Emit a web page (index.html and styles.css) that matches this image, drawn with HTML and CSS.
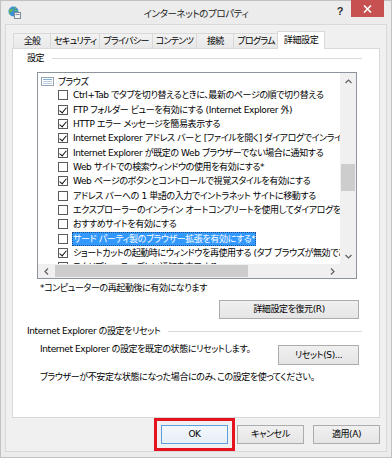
FILE: index.html
```html
<!DOCTYPE html>
<html lang="ja">
<head>
    <meta charset="UTF-8">
    <title>インターネットのプロパティ</title>
    <link rel="stylesheet" href="styles.css">
</head>
<body>
<div class="window">
    <div class="titlebar">
        <svg class="app-icon" width="13" height="13" viewBox="0 0 13 13">
            <circle cx="5.5" cy="5.5" r="5" fill="#3a8fd6"/>
            <path d="M1.6 3.4c1.4-1 3-.6 3.4.4s-.5 1.9-1.7 2.2S1.9 7.4 2.3 8.7C1.1 7.4.7 5 1.6 3.4z" fill="#62b45a"/>
            <path d="M6.3 1.1c1.1.7 1.4 1.7.8 2.4s.4 1.4 1.6 1.2l1.3-.2" fill="none" stroke="#62b45a" stroke-width="1.1"/>
            <rect x="6.5" y="6.5" width="6" height="6" fill="#f3f3f3" stroke="#7d8a9c"/>
            <path d="M7.5 8.5h4" stroke="#7d8a9c"/>
        </svg>
        <div class="title">インターネットのプロパティ</div>
        <div class="controls">
            <div class="help">?</div>
            <div class="close">
                <svg width="9" height="8" viewBox="0 0 9 8"><path d="M1 .5l7 7M8 .5l-7 7" stroke="#fff" stroke-width="1.6"/></svg>
            </div>
        </div>
    </div>

    <div class="client">
        <div class="tabs">
            <div class="tab">全般</div>
            <div class="tab">セキュリティ</div>
            <div class="tab">プライバシー</div>
            <div class="tab">コンテンツ</div>
            <div class="tab">接続</div>
            <div class="tab">プログラム</div>
            <div class="tab active">詳細設定</div>
        </div>

        <div class="panel">
            <div class="group">設定</div>

            <div class="listbox">
                <div class="viewport">
                    <div class="row cat">
                        <svg width="13" height="9" viewBox="0 0 13 9"><rect x=".5" y=".5" width="12" height="8" fill="#fff" stroke="#98a4b4"/><path d="M2 2.5h9" stroke="#7fb0e0"/><path d="M2 4.5h9M2 6.5h9" stroke="#b8cde2"/></svg>
                        <span>ブラウズ</span>
                    </div>
                    <div class="row"><span class="cb"></span><span class="label">Ctrl+Tab でタブを切り替えるときに、最新のページの順で切り替える</span></div>
                    <div class="row"><span class="cb on"></span><span class="label">FTP フォルダー ビューを有効にする (Internet Explorer 外)</span></div>
                    <div class="row"><span class="cb on"></span><span class="label">HTTP エラー メッセージを簡易表示する</span></div>
                    <div class="row"><span class="cb on"></span><span class="label">Internet Explorer アドレス バーと [ファイルを開く] ダイアログでインライン オートコンプリートを使用する</span></div>
                    <div class="row"><span class="cb on"></span><span class="label">Internet Explorer が既定の Web ブラウザーでない場合に通知する</span></div>
                    <div class="row"><span class="cb"></span><span class="label">Web サイトでの検索ウィンドウの使用を有効にする*</span></div>
                    <div class="row"><span class="cb on"></span><span class="label">Web ページのボタンとコントロールで視覚スタイルを有効にする</span></div>
                    <div class="row"><span class="cb"></span><span class="label">アドレス バーへの 1 単語の入力でイントラネット サイトに移動する</span></div>
                    <div class="row"><span class="cb"></span><span class="label">エクスプローラーのインライン オートコンプリートを使用してダイアログを実行する</span></div>
                    <div class="row"><span class="cb"></span><span class="label">おすすめサイトを有効にする</span></div>
                    <div class="row"><span class="cb"></span><span class="label sel">サード パーティ製のブラウザー拡張を有効にする*</span></div>
                    <div class="row"><span class="cb on"></span><span class="label">ショートカットの起動時にウィンドウを再使用する (タブ ブラウズが無効であるとき)</span></div>
                    <div class="row"><span class="cb"></span><span class="label">スクリプト エラーごとに通知を表示する</span></div>
                </div>
                <div class="vscroll">
                    <div class="sb-btn">
                        <svg width="7" height="5" viewBox="0 0 7 5"><path d="M.5 4L3.5 1l3 3" fill="none" stroke="#606060" stroke-width="1.2"/></svg>
                    </div>
                    <div class="thumb"></div>
                    <div class="spacer"></div>
                    <div class="sb-btn">
                        <svg width="7" height="5" viewBox="0 0 7 5"><path d="M.5 1l3 3 3-3" fill="none" stroke="#606060" stroke-width="1.2"/></svg>
                    </div>
                </div>
                <div class="hscroll">
                    <div class="sb-btn">
                        <svg width="5" height="7" viewBox="0 0 5 7"><path d="M4 .5L1 3.5l3 3" fill="none" stroke="#606060" stroke-width="1.2"/></svg>
                    </div>
                    <div class="thumb"></div>
                    <div class="spacer"></div>
                    <div class="sb-btn">
                        <svg width="5" height="7" viewBox="0 0 5 7"><path d="M1 .5l3 3-3 3" fill="none" stroke="#606060" stroke-width="1.2"/></svg>
                    </div>
                </div>
                <div class="corner"></div>
            </div>

            <p class="note">*コンピューターの再起動後に有効になります</p>

            <div class="restore">
                <button class="btn wide">詳細設定を復元(R)</button>
            </div>

            <div class="group">Internet Explorer の設定をリセット</div>

            <div class="reset-row">
                <p>Internet Explorer の設定を既定の状態にリセットします。</p>
                <button class="btn reset">リセット(S)...</button>
            </div>

            <p class="hint">ブラウザーが不安定な状態になった場合にのみ、この設定を使ってください。</p>
        </div>

        <div class="footer">
            <button class="btn default marked">OK</button>
            <button class="btn">キャンセル</button>
            <button class="btn">適用(A)</button>
        </div>
    </div>
</div>
</body>
</html>
```

FILE: styles.css
```css
* {
    box-sizing: border-box;
}
html, body {
    margin: 0;
}
body {
    font-family: "DejaVu Sans", "Noto Sans CJK JP", sans-serif;
    font-size: 9px;
    letter-spacing: -0.4px;
    font-feature-settings: "palt" 1;
    color: #000;
    background: #fff;
}
p {
    margin: 0;
}

/* window frame */
.window {
    width: 392px;
    height: 458px;
    border: 1px solid #c2c2c2;
    background: #ececec;
    padding: 0 4px 5px;
    display: flex;
    flex-direction: column;
}
.titlebar {
    height: 23px;
    flex: none;
    display: grid;
    grid-template-columns: 1fr auto 1fr;
    align-items: start;
}
.app-icon {
    margin: 5px 0 0 3px;
}
.title {
    padding-top: 6px;
    font-size: 9.5px;
    line-height: 14px;
    color: #222;
}
.controls {
    justify-self: end;
    display: flex;
    align-items: flex-start;
}
.help {
    font-family: "Liberation Sans", sans-serif;
    font-weight: bold;
    font-size: 11px;
    line-height: 12px;
    margin: 4px 8px 0 0;
    color: #333;
}
.close {
    width: 33px;
    height: 17px;
    margin-top: -1px;
    margin-right: 3px;
    background: #c75050;
    display: flex;
    align-items: center;
    justify-content: center;
}

/* client area */
.client {
    flex: 1;
    border: 1px solid #d9d9d9;
    background: #f0f0f0;
    padding: 6px 6px 0;
}
.tabs {
    display: flex;
    align-items: flex-end;
    height: 17px;
    margin-left: 2px;
}
.tab {
    height: 15px;
    min-width: 38px;
    padding: 1px 3px 0;
    margin-left: -1px;
    line-height: 13px;
    letter-spacing: -0.7px;
    text-align: center;
    white-space: nowrap;
    border: 1px solid #d9d9d9;
    border-bottom: 0;
    background: linear-gradient(#f2f2f2, #e8e8e8);
}
.tab.active {
    height: 18px;
    padding: 2px 6px 0;
    margin: 0 0 -1px -2px;
    letter-spacing: -0.4px;
    background: #fff;
    position: relative;
    z-index: 1;
}

.panel {
    height: 370px;
    background: #fff;
    border: 1px solid #d9d9d9;
    padding: 1px 20px 0 14px;
}
.group {
    display: flex;
    align-items: center;
    gap: 8px;
    line-height: 14px;
    margin: 1px -3px 0 0;
    white-space: nowrap;
}
.group::after {
    content: "";
    flex: 1;
    border-top: 1px solid #dadada;
}

/* settings list */
.listbox {
    height: 207px;
    margin: 7px 2px 0 10px;
    border: 1px solid #8e949c;
    display: grid;
    grid-template-columns: minmax(0, 1fr) 16px;
    grid-template-rows: minmax(0, 1fr) 14px;
}
.viewport {
    overflow: hidden;
    padding-top: 1px;
}
.row {
    height: 14.33px;
    display: flex;
    align-items: center;
    white-space: nowrap;
    padding-left: 20px;
}
.row.cat {
    padding-left: 3px;
    gap: 4px;
}
.cb {
    flex: none;
    width: 10px;
    height: 10px;
    border: 1px solid #5a5a5a;
    background: #fff;
    margin-right: 5px;
    display: flex;
    justify-content: center;
}
.cb.on::after {
    content: "";
    width: 3px;
    height: 6px;
    border: solid #111;
    border-width: 0 1.5px 1.5px 0;
    transform: rotate(40deg);
}
.label {
    line-height: 14px;
    padding: 0 1px;
    margin-left: -1px;
}
.label.sel {
    background: #3399ff;
    color: #fff;
    outline: 1px dotted #1a4f8a;
    outline-offset: -1px;
}

.vscroll, .hscroll, .corner {
    background: #f0f0f0;
}
.vscroll {
    display: flex;
    flex-direction: column;
}
.hscroll {
    display: flex;
}
.sb-btn {
    flex: none;
    width: 16px;
    height: 16px;
    display: flex;
    align-items: center;
    justify-content: center;
}
.hscroll .sb-btn {
    height: 14px;
}
.spacer {
    flex: 1;
}
.vscroll .thumb {
    height: 27px;
    margin: 75px 1px 0;
    background: #cdcdcd;
}
.hscroll .thumb {
    width: 193px;
    margin: 1px 0 1px 1px;
    background: #cdcdcd;
}

.note {
    line-height: 14px;
    margin: 2px 0 0 13px;
}
.restore {
    display: flex;
    justify-content: flex-end;
    margin: 5px 0;
}
.reset-row {
    display: flex;
    justify-content: space-between;
    align-items: flex-start;
    line-height: 14px;
    margin: 4px 0 0 13px;
}
.hint {
    line-height: 14px;
    margin: 5px 0 0 13px;
    white-space: nowrap;
}

/* buttons */
.btn {
    height: 19px;
    padding: 0;
    border: 1px solid #acacac;
    background: linear-gradient(#f0f0f0, #e5e5e5);
    font: inherit;
    font-feature-settings: inherit;
    letter-spacing: inherit;
    line-height: 17px;
    color: #000;
    text-align: center;
}
.btn.wide {
    width: 140px;
}
.btn.reset {
    flex: none;
    width: 81px;
    height: 20px;
    margin-top: 3px;
}
.footer {
    display: flex;
    justify-content: flex-end;
    gap: 9px;
    margin-top: 7px;
}
.footer .btn {
    width: 67px;
}
.btn.default {
    border-color: #5c9ee0;
    background: linear-gradient(#f3f8fd, #e6eef7);
}
.btn.marked {
    outline: 3px solid #e5131f;
    outline-offset: 4px;
}
```
